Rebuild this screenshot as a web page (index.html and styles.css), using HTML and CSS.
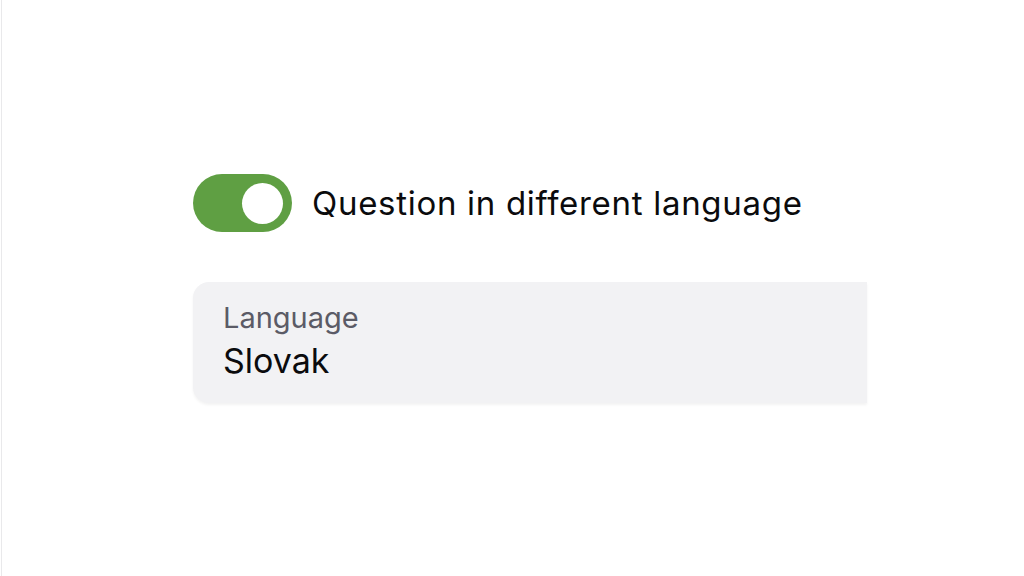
FILE: index.html
```html
<!DOCTYPE html>
<html lang="en">
<head>
<meta charset="utf-8">
<title>Question language</title>
<link rel="stylesheet" href="styles.css">
</head>
<body>
<div class="page">
  <div class="panel">
    <div class="toggle-row">
      <div class="toggle" role="switch" aria-checked="true"><span class="knob"></span></div>
      <span class="toggle-label">Question in different language</span>
    </div>
    <div class="field">
      <div class="field-label">Language</div>
      <div class="field-value">Slovak</div>
    </div>
  </div>
</div>
</body>
</html>
```
FILE: styles.css
```css
* { box-sizing: border-box; }
html, body { margin: 0; padding: 0; background: #ffffff; }
body {
  font-family: Inter, "Noto Sans", sans-serif;
  color: #0b0b0d;
  width: 1024px;
  height: 576px;
  overflow: hidden;
}
.page {
  height: 576px;
  margin-left: 1px;
  border-left: 1px solid #e9e9eb;
  padding: 174px 0 0 191px;
}
.panel {
  width: 674px;
  display: flex;
  flex-direction: column;
  gap: 50px;
}
.toggle-row {
  display: flex;
  align-items: center;
  gap: 20px;
}
.toggle {
  width: 99px;
  height: 58px;
  border-radius: 29px;
  background: #5f9f43;
  display: flex;
  align-items: center;
  justify-content: flex-end;
  padding-right: 9px;
  flex: none;
}
.knob {
  width: 41px;
  height: 41px;
  border-radius: 50%;
  background: #ffffff;
}
.toggle-label {
  font-size: 33px;
  line-height: 40px;
  letter-spacing: 0.7px;
}
.field {
  height: 121px;
  background: #f2f2f4;
  border-radius: 16px 0 0 16px;
  box-shadow: 0 2px 3px rgba(0,0,0,0.05);
  padding: 18px 0 0 30px;
}
.field-label {
  font-size: 29px;
  line-height: 35px;
  color: #5b5b66;
}
.field-value {
  margin-top: 6px;
  font-size: 34px;
  line-height: 40px;
  color: #0b0b0d;
}
```
